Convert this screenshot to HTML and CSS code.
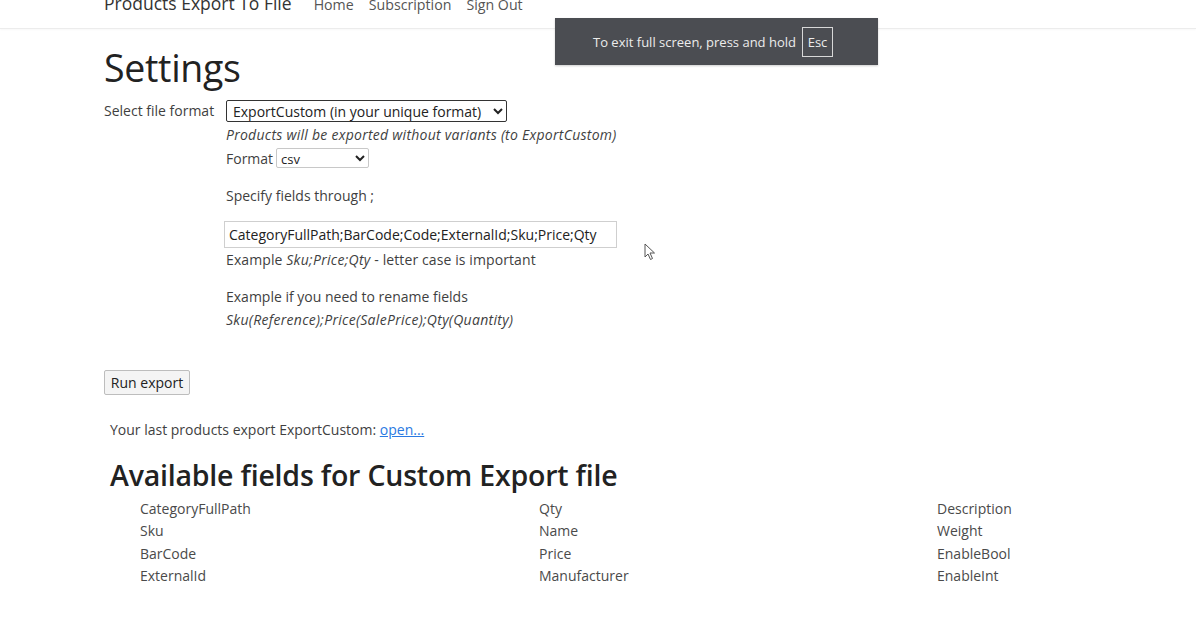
FILE: index.html
```html
<!DOCTYPE html>
<html>
<head>
<meta charset="utf-8">
<link rel="stylesheet" href="styles.css">
</head>
<body>
<header class="navbar">
  <div class="nav-inner">
    <span class="brand">Products Export To File</span>
    <a class="nav-link" href="#">Home</a>
    <a class="nav-link" href="#">Subscription</a>
    <a class="nav-link" href="#">Sign Out</a>
  </div>
</header>

<div class="fs-notice">To exit full screen, press and hold <span class="esc">Esc</span></div>

<main class="content">
  <h1 class="title">Settings</h1>

  <div class="form">
    <label class="lbl">Select file format</label>
    <div class="field-col">
      <select class="sel-format">
        <option>ExportCustom (in your unique format)</option>
      </select>
      <div class="note">Products will be exported without variants (to ExportCustom)</div>
      <div class="fmt-row">
        <span>Format</span>
        <select class="sel-csv"><option>csv</option></select>
      </div>
      <div class="specify">Specify fields through ;</div>
      <input class="fields-input" type="text" value="CategoryFullPath;BarCode;Code;ExternalId;Sku;Price;Qty">
      <div class="example">Example <i>Sku;Price;Qty</i> - letter case is important</div>
      <div class="rename">Example if you need to rename fields</div>
      <div class="rename-ex">Sku(Reference);Price(SalePrice);Qty(Quantity)</div>
    </div>
  </div>

  <button class="run-btn">Run export</button>

  <p class="last-export">Your last products export ExportCustom: <a href="#">open...</a></p>

  <h2 class="fields-title">Available fields for Custom Export file</h2>
  <div class="fields-grid">
    <div>CategoryFullPath</div><div>Qty</div><div>Description</div>
    <div>Sku</div><div>Name</div><div>Weight</div>
    <div>BarCode</div><div>Price</div><div>EnableBool</div>
    <div>ExternalId</div><div>Manufacturer</div><div>EnableInt</div>
  </div>
</main>

<svg class="cursor" width="12" height="18" viewBox="0 0 12 18">
  <path d="M1 1 L1 14 L4 11 L6.5 16.5 L8.5 15.5 L6 10 L10.5 10 Z" fill="#fff" stroke="#555" stroke-width="1"/>
</svg>
</body>
</html>
```
FILE: styles.css
```css
* { box-sizing: border-box; }
html, body { margin: 0; padding: 0; background: #fff; }
body {
  font-family: "Open Sans", "Noto Sans", sans-serif;
  font-size: 14px;
  color: #3f3f3f;
  width: 1196px;
  height: 628px;
  overflow: hidden;
  position: relative;
}

.navbar {
  height: 29px;
  border-bottom: 1px solid #ececec;
  box-shadow: 0 1px 2px rgba(0,0,0,0.03);
  overflow: hidden;
}
.nav-inner {
  display: flex;
  align-items: baseline;
  padding-left: 104px;
  margin-top: -8px;
  line-height: 22px;
}
.brand {
  font-size: 17.5px;
  color: #333;
  margin-right: 22px;
}
.nav-link {
  color: #555;
  text-decoration: none;
  font-size: 14.2px;
  margin-right: 15px;
}

.fs-notice {
  position: absolute;
  left: 555px;
  top: 18px;
  width: 323px;
  height: 47px;
  background: #4b4d52;
  color: #ececec;
  font-size: 13px;
  display: flex;
  align-items: center;
  justify-content: center;
  gap: 6px;
  padding-right: 7px;
  box-shadow: 0 1px 2px rgba(0,0,0,0.2);
}
.esc {
  border: 1px solid #d8d8d8;
  width: 31px;
  height: 30px;
  display: flex;
  align-items: center;
  justify-content: center;
}

.content {
  padding-left: 104px;
}

.title {
  font-size: 37.5px;
  font-weight: 500;
  color: #222;
  margin: 16px 0 0 0;
  line-height: 46px;
  letter-spacing: -0.3px;
}

.form {
  display: grid;
  grid-template-columns: 122px auto;
  margin-top: 9px;
}
.lbl {
  line-height: 22px;
}
.field-col {
  display: flex;
  flex-direction: column;
  align-items: flex-start;
}
.sel-format {
  width: 281px;
  height: 22px;
  font-family: inherit;
  font-size: 14px;
  color: #222;
  border: 1.5px solid #333;
  border-radius: 2px;
  padding: 0 2px;
  background: #fff;
}
.note {
  font-style: italic;
  letter-spacing: 0.26px;
  margin-top: 3px;
  line-height: 20px;
}
.fmt-row {
  display: flex;
  align-items: center;
  gap: 3px;
  margin-top: 3px;
  height: 20px;
}
.sel-csv {
  width: 93px;
  height: 20px;
  font-family: inherit;
  font-size: 13px;
  color: #222;
  border: 1px solid #c8c8c8;
  border-radius: 2px;
  background: #fff;
}
.specify {
  margin-top: 18px;
  line-height: 20px;
}
.fields-input {
  margin-top: 15px;
  margin-left: -2px;
  width: 393px;
  height: 27px;
  font-family: inherit;
  font-size: 14px;
  color: #222;
  border: 1px solid #cfcfcf;
  padding: 0 4px;
}
.example {
  line-height: 20px;
  margin-top: 2px;
  letter-spacing: 0.1px;
}
.example i {
  letter-spacing: 0.3px;
}
.rename {
  margin-top: 17px;
  line-height: 20px;
}
.rename-ex {
  font-style: italic;
  letter-spacing: 0.3px;
  line-height: 20px;
  margin-top: 3px;
}

.run-btn {
  display: block;
  margin-top: 40px;
  height: 25px;
  width: 86px;
  font-family: inherit;
  font-size: 14px;
  color: #222;
  background: #f4f4f4;
  border: 1px solid #bdbdbd;
  border-radius: 2px;
  padding: 0;
}

.last-export {
  margin: 25px 0 0 6px;
  line-height: 20px;
}
.last-export a {
  color: #2a7ae2;
}

.fields-title {
  font-size: 28.5px;
  font-weight: 600;
  color: #222;
  margin: 18px 0 0 6px;
  line-height: 34px;
  letter-spacing: -0.2px;
}
.fields-grid {
  display: grid;
  grid-template-columns: 399px 398px 200px;
  padding-left: 36px;
  margin-top: 6px;
  line-height: 22.35px;
  color: #4a4a4a;
}

.cursor {
  position: absolute;
  left: 644px;
  top: 243px;
}
```
